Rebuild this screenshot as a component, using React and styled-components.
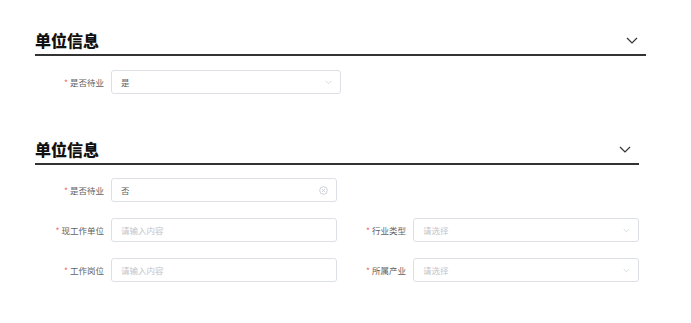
import styled, { createGlobalStyle } from "styled-components";

const GlobalStyle = createGlobalStyle`
  body {
    margin: 0;
    background: #fff;
    font-family: "Noto Sans CJK SC", "Noto Sans", sans-serif;
  }
`;

const Page = styled.div`
  padding: 31px 0 0 35px;
  display: flex;
  flex-direction: column;
  gap: 46px;
`;

const Panel = styled.section`
  width: ${(p) => p.$width}px;
`;

const Header = styled.div`
  display: flex;
  align-items: center;
  justify-content: space-between;
  height: 23px;
  border-bottom: 2px solid #333;
`;

const Title = styled.h2`
  align-self: flex-start;
  margin: 0;
  font-size: 16px;
  line-height: 19px;
  font-weight: 900;
  color: #111;
`;

const Toggle = styled.span`
  display: flex;
  padding-right: 8px;
  margin-top: -5px;
`;

const Grid = styled.div`
  display: grid;
  grid-template-columns: 1fr 1fr;
  row-gap: 16px;
  margin-top: ${(p) => p.$top}px;
`;

const Item = styled.div`
  display: flex;
  align-items: center;
`;

const Label = styled.label`
  width: 69px;
  padding-right: 7px;
  text-align: right;
  font-size: 8.5px;
  color: #606266;
  white-space: nowrap;
  flex-shrink: 0;
`;

const Star = styled.span`
  color: #f56c6c;
  margin-right: 2px;
`;

const Box = styled.div`
  flex: 1;
  height: 24px;
  box-sizing: border-box;
  border: 1px solid #dcdfe6;
  border-radius: 3px;
  display: flex;
  align-items: center;
  justify-content: space-between;
  padding: 0 8px 0 9px;
  font-size: 8.5px;
  color: ${(p) => (p.$empty ? "#c0c4cc" : "#606266")};
`;

const Spacer = styled.div``;

const Chevron = ({ size = 12, color = "#333", stroke = 1.2 }) => (
  <svg width={size} height={size / 2 + 1} viewBox="0 0 12 7" fill="none">
    <path d="M1 1l5 5 5-5" stroke={color} strokeWidth={stroke} />
  </svg>
);

const Clear = () => (
  <svg width="9" height="9" viewBox="0 0 9 9" fill="none">
    <circle cx="4.5" cy="4.5" r="3.8" stroke="#c0c4cc" strokeWidth="0.8" />
    <path d="M3 3l3 3M6 3l-3 3" stroke="#c0c4cc" strokeWidth="0.8" />
  </svg>
);

const Field = ({ label, value, placeholder, kind }) => (
  <Item>
    <Label>
      <Star>*</Star>
      {label}
    </Label>
    <Box $empty={!value}>
      <span>{value || placeholder}</span>
      {kind === "select" && <Chevron size={7} color="#c0c4cc" stroke={1} />}
      {kind === "clear" && <Clear />}
    </Box>
  </Item>
);

export default function App() {
  return (
    <>
      <GlobalStyle />
      <Page>
        <Panel $width={611}>
          <Header>
            <Title>单位信息</Title>
            <Toggle>
              <Chevron />
            </Toggle>
          </Header>
          <Grid $top={14}>
            <Field label="是否待业" value="是" kind="select" />
          </Grid>
        </Panel>

        <Panel $width={604}>
          <Header>
            <Title>单位信息</Title>
            <Toggle>
              <Chevron />
            </Toggle>
          </Header>
          <Grid $top={13}>
            <Field label="是否待业" value="否" kind="clear" />
            <Spacer />
            <Field label="现工作单位" placeholder="请输入内容" />
            <Field label="行业类型" placeholder="请选择" kind="select" />
            <Field label="工作岗位" placeholder="请输入内容" />
            <Field label="所属产业" placeholder="请选择" kind="select" />
          </Grid>
        </Panel>
      </Page>
    </>
  );
}
